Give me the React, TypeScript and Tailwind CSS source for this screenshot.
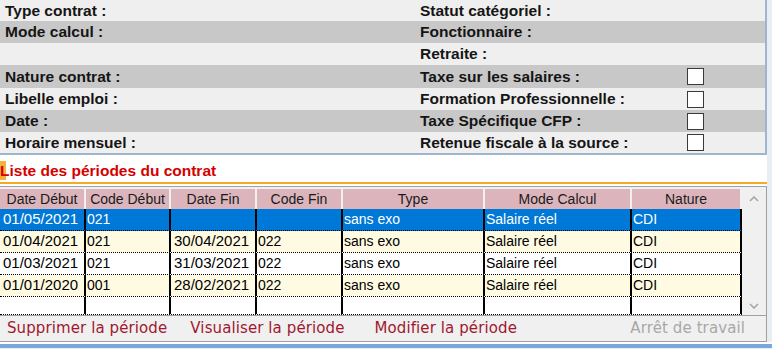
import React from 'react';

const ROWS = [
  { h: 'h-[21px]', band: 'bg-[#efefef]', left: 'Type contrat :', right: 'Statut catégoriel :', check: false },
  { h: 'h-[22px]', band: 'bg-[#c8c8c8]', left: 'Mode calcul :', right: 'Fonctionnaire :', check: false },
  { h: 'h-[22px]', band: 'bg-[#efefef]', left: '', right: 'Retraite :', check: false },
  { h: 'h-[23px]', band: 'bg-[#c8c8c8]', left: 'Nature contrat :', right: 'Taxe sur les salaires :', check: true },
  { h: 'h-[22px]', band: 'bg-[#efefef]', left: 'Libelle emploi :', right: 'Formation Professionnelle :', check: true },
  { h: 'h-[22px]', band: 'bg-[#c8c8c8]', left: 'Date :', right: 'Taxe Spécifique CFP :', check: true },
  { h: 'h-[21px]', band: 'bg-[#efefef]', left: 'Horaire mensuel :', right: 'Retenue fiscale à la source :', check: true },
];

const COLS = [
  { label: 'Date Début', w: 'w-[86px]', pad: 'pl-[3px]', date: true },
  { label: 'Code Début', w: 'w-[85px]', pad: 'pl-[1px]', date: false },
  { label: 'Date Fin', w: 'w-[86px]', pad: 'pl-[3px]', date: true },
  { label: 'Code Fin', w: 'w-[86px]', pad: 'pl-[1px]', date: false },
  { label: 'Type', w: 'w-[142px]', pad: 'pl-[1px]', date: false },
  { label: 'Mode Calcul', w: 'w-[147px]', pad: 'pl-[1px]', date: false },
  { label: 'Nature', w: 'w-[110px]', pad: 'pl-[1px]', date: false },
];

const PERIODES = [
  ['01/05/2021', '021', '', '', 'sans exo', 'Salaire réel', 'CDI'],
  ['01/04/2021', '021', '30/04/2021', '022', 'sans exo', 'Salaire réel', 'CDI'],
  ['01/03/2021', '021', '31/03/2021', '022', 'sans exo', 'Salaire réel', 'CDI'],
  ['01/01/2020', '001', '28/02/2021', '022', 'sans exo', 'Salaire réel', 'CDI'],
  ['', '', '', '', '', '', ''],
];

const rowBg = (i: number) => {
  if (i === 0) return 'bg-[#0078d7] text-white';
  if (i === 1 || i === 3) return 'bg-[#fffbe2] text-black';
  return 'bg-white text-black';
};

const Chevron = ({ up }: { up: boolean }) => (
  <svg width="10" height="6" viewBox="0 0 10 6" className="block">
    <path
      d={up ? 'M1 5 L5 1 L9 5' : 'M1 1 L5 5 L9 1'}
      fill="none"
      stroke="#a6a6a6"
      strokeWidth="1.6"
    />
  </svg>
);

export default function App() {
  return (
    <div className="w-[772px] h-[349px] overflow-hidden bg-[#e9eef4] font-['Liberation_Sans',Arial,sans-serif]">
      {/* entête du contrat */}
      <div className="w-[767px] flex flex-col border-r-2 border-b-2 border-[#9fb5cd]">
        {ROWS.map((r, i) => (
          <div key={i} className={`${r.h} ${r.band} flex items-center text-[15.5px] font-bold text-[#151515]`}>
            <div className="w-[420px] pl-[5px]">{r.left}</div>
            <div className="w-[267px]">{r.right}</div>
            {r.check && <div className="w-[17px] h-[17px] bg-white border border-[#3a3a3a]" />}
          </div>
        ))}
      </div>

      <div className="w-[767px] bg-white">
        {/* titre */}
        <div className="h-[29px] flex items-end border-b-2 border-[#f7a925]">
          <div className="relative h-[20px] flex items-center mb-[1px]">
            <div className="absolute left-0 top-0 w-[6px] h-[19px] bg-[#f7b13a]" />
            <span className="relative text-[15.5px] font-bold text-[#d40000]">Liste des périodes du contrat</span>
          </div>
        </div>

        {/* grille */}
        <div className="mt-[2px] h-[130px] flex bg-[#f0f0f0] border-t border-b border-r border-[#a0a0a0]">
          <div className="flex flex-col pt-[2px]">
            <div className="flex h-[20px]">
              {COLS.map((c) => (
                <div key={c.label} className={`${c.w} pr-[2px] h-full`}>
                  <div className="h-full bg-[#dcb5bc] flex items-center justify-center text-[14px] text-[#1a1a1a]">
                    {c.label}
                  </div>
                </div>
              ))}
            </div>
            {PERIODES.map((row, i) => (
              <div key={i} className={`flex ${i === 4 ? 'h-[18px]' : 'h-[22px]'} ${rowBg(i)} border-b border-dotted border-black`}>
                {COLS.map((c, j) => (
                  <div
                    key={j}
                    className={`${c.w} ${c.pad} h-full flex items-center border-r-2 border-black whitespace-nowrap overflow-hidden ${c.date ? 'text-[15px]' : 'text-[14px]'}`}
                  >
                    {row[j]}
                  </div>
                ))}
              </div>
            ))}
          </div>
          {/* barre de défilement */}
          <div className="flex-1 flex flex-col items-center justify-between pt-[9px] pb-[6px]">
            <Chevron up />
            <Chevron up={false} />
          </div>
        </div>

        {/* actions */}
        <div className="h-[26px] flex items-center bg-[#f0f0f0] border-b border-r border-[#a0a0a0] text-[15px] font-['DejaVu_Sans',Verdana,sans-serif] tracking-[0.1px]">
          <span className="ml-[7px] text-[#a0182f]">Supprimer la période</span>
          <span className="ml-[23px] text-[#a0182f]">Visualiser la période</span>
          <span className="ml-[30px] text-[#a0182f]">Modifier la période</span>
          <span className="ml-auto mr-[21px] text-[#a8a8a8]">Arrêt de travail</span>
        </div>
      </div>
      <div className="h-[2px] bg-white" />
      <div className="h-[4px] bg-[#7aa7dd]" />
    </div>
  );
}
